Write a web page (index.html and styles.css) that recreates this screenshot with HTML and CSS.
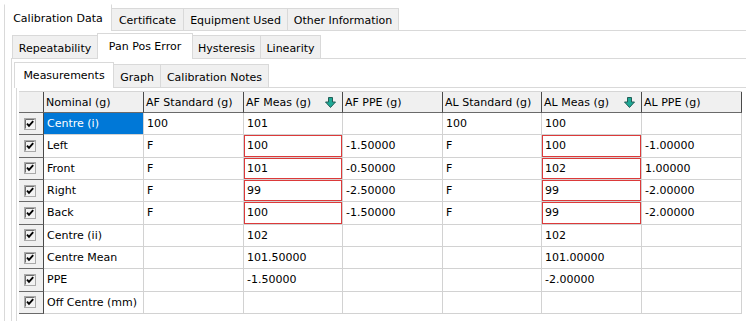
FILE: index.html
```html
<!DOCTYPE html>
<html>
<head>
<meta charset="utf-8">
<title>Calibration Data</title>
<link rel="stylesheet" href="styles.css">
</head>
<body>
<svg class="defs" width="0" height="0" aria-hidden="true">
  <symbol id="chk" viewBox="0 0 12 12">
    <rect x="0.5" y="0.5" width="11" height="11" fill="#f3f3f3" stroke="#a9a9a9"/>
    <path d="M1.5 10.5V1.5H10.5" fill="none" stroke="#6e6e6e"/>
    <path d="M3 5.6L5 7.8L9.2 3.2" fill="none" stroke="#000" stroke-width="1.9"/>
  </symbol>
  <symbol id="arr" viewBox="0 0 11 11">
    <path d="M3.5 0.5H7.5V5H10.5L5.5 10.5L0.5 5H3.5Z" fill="#1ea996" stroke="#235e56" stroke-width="1"/>
  </symbol>
</svg>

<div class="strip s1">
  <div class="tab sel t-cal">Calibration Data</div>
  <div class="tab t-cert">Certificate</div>
  <div class="tab t-eq">Equipment Used</div>
  <div class="tab t-oth">Other Information</div>
</div>
<div class="panel p1">
  <div class="strip s2">
    <div class="tab t-rep">Repeatability</div>
    <div class="tab sel t-ppe">Pan Pos Error</div>
    <div class="tab t-hys">Hysteresis</div>
    <div class="tab t-lin">Linearity</div>
  </div>
  <div class="panel p2">
    <div class="strip s3">
      <div class="tab sel t-meas">Measurements</div>
      <div class="tab t-graph">Graph</div>
      <div class="tab t-notes">Calibration Notes</div>
    </div>
    <div class="panel p3">
      <div class="grid">
        <div class="c h corner"></div>
        <div class="c h">Nominal (g)</div>
        <div class="c h">AF Standard (g)</div>
        <div class="c h">AF Meas (g)<svg class="arrow"><use href="#arr"/></svg></div>
        <div class="c h">AF PPE (g)</div>
        <div class="c h">AL Standard (g)</div>
        <div class="c h">AL Meas (g)<svg class="arrow"><use href="#arr"/></svg></div>
        <div class="c h">AL PPE (g)</div>

        <div class="c rh"><svg class="chk"><use href="#chk"/></svg></div>
        <div class="c cur">Centre (i)</div>
        <div class="c">100</div>
        <div class="c">101</div>
        <div class="c"></div>
        <div class="c">100</div>
        <div class="c">100</div>
        <div class="c"></div>

        <div class="c rh"><svg class="chk"><use href="#chk"/></svg></div>
        <div class="c">Left</div>
        <div class="c">F</div>
        <div class="c red">100</div>
        <div class="c">-1.50000</div>
        <div class="c">F</div>
        <div class="c red">100</div>
        <div class="c">-1.00000</div>

        <div class="c rh"><svg class="chk"><use href="#chk"/></svg></div>
        <div class="c">Front</div>
        <div class="c">F</div>
        <div class="c red">101</div>
        <div class="c">-0.50000</div>
        <div class="c">F</div>
        <div class="c red">102</div>
        <div class="c">1.00000</div>

        <div class="c rh"><svg class="chk"><use href="#chk"/></svg></div>
        <div class="c">Right</div>
        <div class="c">F</div>
        <div class="c red">99</div>
        <div class="c">-2.50000</div>
        <div class="c">F</div>
        <div class="c red">99</div>
        <div class="c">-2.00000</div>

        <div class="c rh"><svg class="chk"><use href="#chk"/></svg></div>
        <div class="c">Back</div>
        <div class="c">F</div>
        <div class="c red">100</div>
        <div class="c">-1.50000</div>
        <div class="c">F</div>
        <div class="c red">99</div>
        <div class="c">-2.00000</div>

        <div class="c rh"><svg class="chk"><use href="#chk"/></svg></div>
        <div class="c">Centre (ii)</div>
        <div class="c"></div>
        <div class="c">102</div>
        <div class="c"></div>
        <div class="c"></div>
        <div class="c">102</div>
        <div class="c"></div>

        <div class="c rh"><svg class="chk"><use href="#chk"/></svg></div>
        <div class="c">Centre Mean</div>
        <div class="c"></div>
        <div class="c">101.50000</div>
        <div class="c"></div>
        <div class="c"></div>
        <div class="c">101.00000</div>
        <div class="c"></div>

        <div class="c rh"><svg class="chk"><use href="#chk"/></svg></div>
        <div class="c">PPE</div>
        <div class="c"></div>
        <div class="c">-1.50000</div>
        <div class="c"></div>
        <div class="c"></div>
        <div class="c">-2.00000</div>
        <div class="c"></div>

        <div class="c rh"><svg class="chk"><use href="#chk"/></svg></div>
        <div class="c">Off Centre (mm)</div>
        <div class="c"></div>
        <div class="c"></div>
        <div class="c"></div>
        <div class="c"></div>
        <div class="c"></div>
        <div class="c"></div>
      </div>
    </div>
  </div>
</div>
</body>
</html>
```

FILE: styles.css
```css
html, body {
  margin: 0;
  padding: 0;
  background: #fff;
}
body {
  width: 746px;
  height: 321px;
  overflow: hidden;
  font-family: "DejaVu Sans", Verdana, sans-serif;
  font-size: 11px;
  color: #000;
}
.defs {
  position: absolute;
  width: 0;
  height: 0;
}

/* ---------- tab strips ---------- */
.strip {
  display: flex;
  align-items: flex-end;
  box-sizing: border-box;
}
.tab {
  box-sizing: border-box;
  border: 1px solid #d9d9d9;
  border-bottom: none;
  background: #f0f0f0;
  display: flex;
  justify-content: center;
  align-items: center;
  white-space: nowrap;
  padding-top: 2px;
}
.tab + .tab {
  margin-left: -1px;
}
.tab.sel {
  background: #fff;
  position: relative;
  z-index: 1;
  margin-bottom: -1px;
  padding-top: 0;
}

.s1 {
  height: 30px;
  padding-left: 4px;
}
.s1 .tab { height: 22px; }
.s1 .tab.sel { height: 27px; border-top-color: #fff; }
.t-cal { width: 108px; }
.t-cert { width: 73px; }
.t-eq { width: 105px; }
.t-oth { width: 112px; }

.s2 {
  height: 27px;
  padding-left: 7px;
}
.s2 .tab { height: 23px; }
.s2 .tab.sel { height: 26px; }
.t-rep { width: 86px; }
.t-ppe { width: 96px; }
.t-hys { width: 69px; }
.t-lin { width: 61px; }

.s3 {
  height: 28px;
  padding-left: 2px;
}
.s3 .tab { height: 23px; }
.s3 .tab.sel { height: 26px; }
.t-meas { width: 100px; }
.t-graph { width: 48px; }
.t-notes { width: 109px; }

/* ---------- panels ---------- */
.panel {
  box-sizing: border-box;
  border-top: 1px solid #d9d9d9;
  border-left: 1px solid #d9d9d9;
}
.p1 {
  margin-left: 4px;
  height: 291px;
}
.p2 {
  margin-left: 6px;
  height: 263px;
}
.p3 {
  margin-left: 4px;
  padding: 3px 0 0 2px;
  height: 234px;
}

/* ---------- grid ---------- */
.grid {
  display: grid;
  grid-template-columns: 25px 100px 100px 99px 100px 99px 100px 100px;
  grid-template-rows: 21px repeat(9, 22.33px);
  border-top: 1px solid #d6d6d6;
  width: 723px;
}
.c {
  box-sizing: border-box;
  border-right: 1px solid #d2d2d2;
  border-bottom: 1px solid #d2d2d2;
  padding-left: 3px;
  display: flex;
  align-items: center;
  white-space: nowrap;
  overflow: hidden;
}
.h {
  background: #f0f0f0;
  border-right-color: #4a4a4a;
  border-bottom-color: #6a6a6a;
  padding-left: 2px;
}
.corner {
  padding: 0;
}
.rh {
  background: #f0f0f0;
  border-right-color: #4a4a4a;
  border-bottom-color: #6a6a6a;
  padding: 0 0 0 5px;
}
.chk {
  width: 12px;
  height: 12px;
  display: block;
}
.arrow {
  width: 11px;
  height: 11px;
  margin-left: auto;
  margin-right: 6px;
  flex: none;
}
.cur {
  background: #0078d7;
  color: #fff;
}
.red {
  box-shadow: inset 0 0 0 1px #dc3a3a;
  padding-left: 3px;
}
```
